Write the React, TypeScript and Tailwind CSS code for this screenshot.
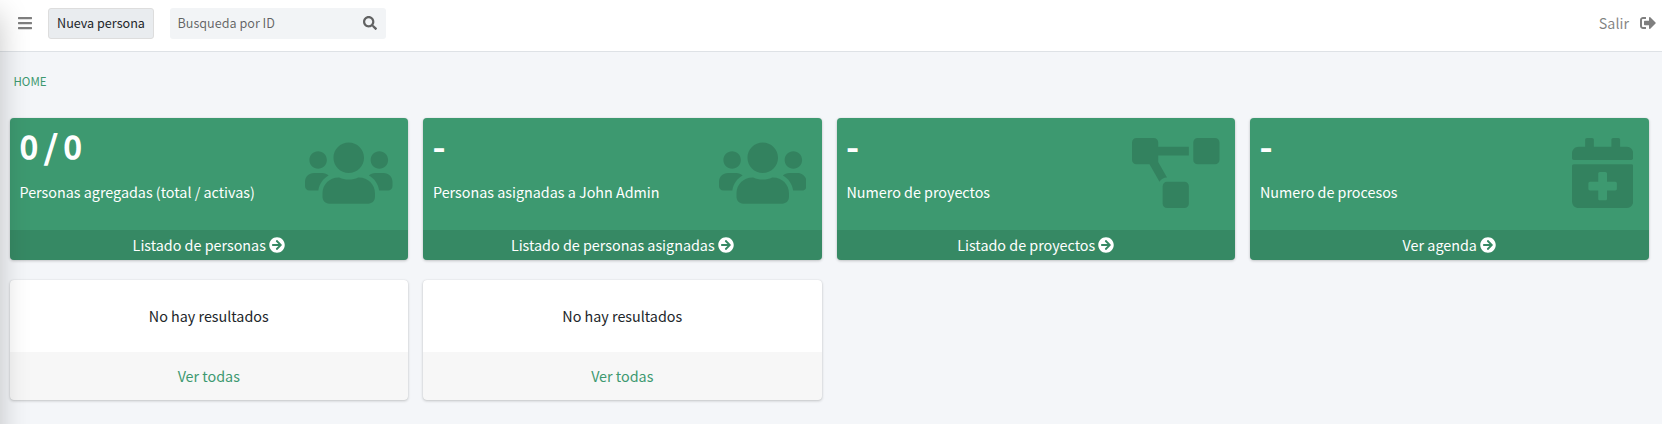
import { FaArrowCircleRight, FaBars, FaCalendarPlus, FaProjectDiagram, FaSearch, FaSignOutAlt, FaUsers } from 'react-icons/fa';
import type { IconType } from 'react-icons';

interface Stat {
  value: string;
  label: string;
  link: string;
  icon: IconType;
  iconClass: string;
}

const stats: Stat[] = [
  { value: '0 / 0', label: 'Personas agregadas (total / activas)', link: 'Listado de personas', icon: FaUsers, iconClass: 'w-[87.5px]' },
  { value: '-', label: 'Personas asignadas a John Admin', link: 'Listado de personas asignadas', icon: FaUsers, iconClass: 'w-[87.5px]' },
  { value: '-', label: 'Numero de proyectos', link: 'Listado de proyectos', icon: FaProjectDiagram, iconClass: 'w-[87.5px]' },
  { value: '-', label: 'Numero de procesos', link: 'Ver agenda', icon: FaCalendarPlus, iconClass: 'w-[61.25px]' },
];

function SmallBox({ value, label, link, icon: Icon, iconClass }: Stat) {
  return (
    <section className="flex h-[142px] flex-col overflow-hidden rounded-[4px] bg-[#3d9970] text-white shadow-[0_0_1px_rgba(0,0,0,0.125),0_1px_3px_rgba(0,0,0,0.2)]">
      <div className="flex flex-1 justify-between pl-[10px] pr-[15.5px]">
        <div className="pt-2">
          <h3 className="h-[54px] whitespace-pre pl-[0.5px] text-[32px] font-normal leading-[38px] tracking-[-0.2px] [-webkit-text-stroke:1.6px_white]">{value}</h3>
          <p className="text-[14.34px] leading-6">{label}</p>
        </div>
        <Icon className={'mt-5 h-[70px] text-black/15 ' + iconClass} />
      </div>
      <a href="#" className="flex h-[30px] items-center justify-center gap-[3px] bg-black/10 text-[14.34px] leading-6">
        <span>{link}</span>
        <FaArrowCircleRight className="size-4" />
      </a>
    </section>
  );
}

function ResultCard() {
  return (
    <section className="overflow-hidden rounded-[4px] bg-white text-center text-[14.34px] leading-6 shadow-[0_0_1px_rgba(0,0,0,0.125),0_1px_3px_rgba(0,0,0,0.2)]">
      <p className="h-[72px] pt-6">No hay resultados</p>
      <div className="h-12 bg-black/3 pt-3">
        <a href="#" className="text-[#3d9970]">Ver todas</a>
      </div>
    </section>
  );
}

export default function App() {
  return (
    <div className="relative h-[424px] overflow-hidden bg-[#f4f6f9] font-['Noto_Sans_CJK_SC','Source_Sans_Pro',sans-serif] text-[#212529]">
      <nav className="flex h-[52px] items-start border-b border-[#dee2e6] bg-white pl-[18px] pr-[6px] pt-2">
        <button className="mr-4 flex h-[30px] items-center text-black/50">
          <FaBars className="h-4 w-[14px]" />
        </button>
        <button className="h-[31px] w-[106px] rounded-[3px] border border-[#ddd] bg-[#e9ecef] pb-0.5 text-[12.6px] leading-[20px]">Nueva persona</button>
        <form className="ml-4 flex h-[31px] w-[216px] items-center justify-between rounded-[3px] bg-[#f2f4f6] pl-[7.5px] pr-[9px]">
          <input className="mb-0.5 w-[160px] text-[12.6px] leading-[21px] outline-none placeholder:text-black/60" placeholder="Busqueda por ID" />
          <FaSearch className="mb-0.5 size-[14px] text-black/60" />
        </form>
        <a href="#" className="ml-auto flex h-[29px] items-center gap-[11px] text-[14.34px] text-black/50">
          <span>Salir</span>
          <FaSignOutAlt className="size-4" />
        </a>
      </nav>
      <main className="pl-[9.5px] pr-[13.5px]">
        <div className="h-[66px] pl-1 pt-[20px] text-[11.5px] leading-[19px] text-[#3d9970]">HOME</div>
        <div className="grid grid-cols-4 gap-x-[15px] gap-y-5">
          {stats.map((stat) => (
            <SmallBox key={stat.label} {...stat} />
          ))}
          <ResultCard />
          <ResultCard />
        </div>
      </main>
      <div className="absolute -left-[250px] top-0 h-[600px] w-[250px] shadow-[0_14px_28px_rgba(0,0,0,0.22)]" />
    </div>
  );
}
